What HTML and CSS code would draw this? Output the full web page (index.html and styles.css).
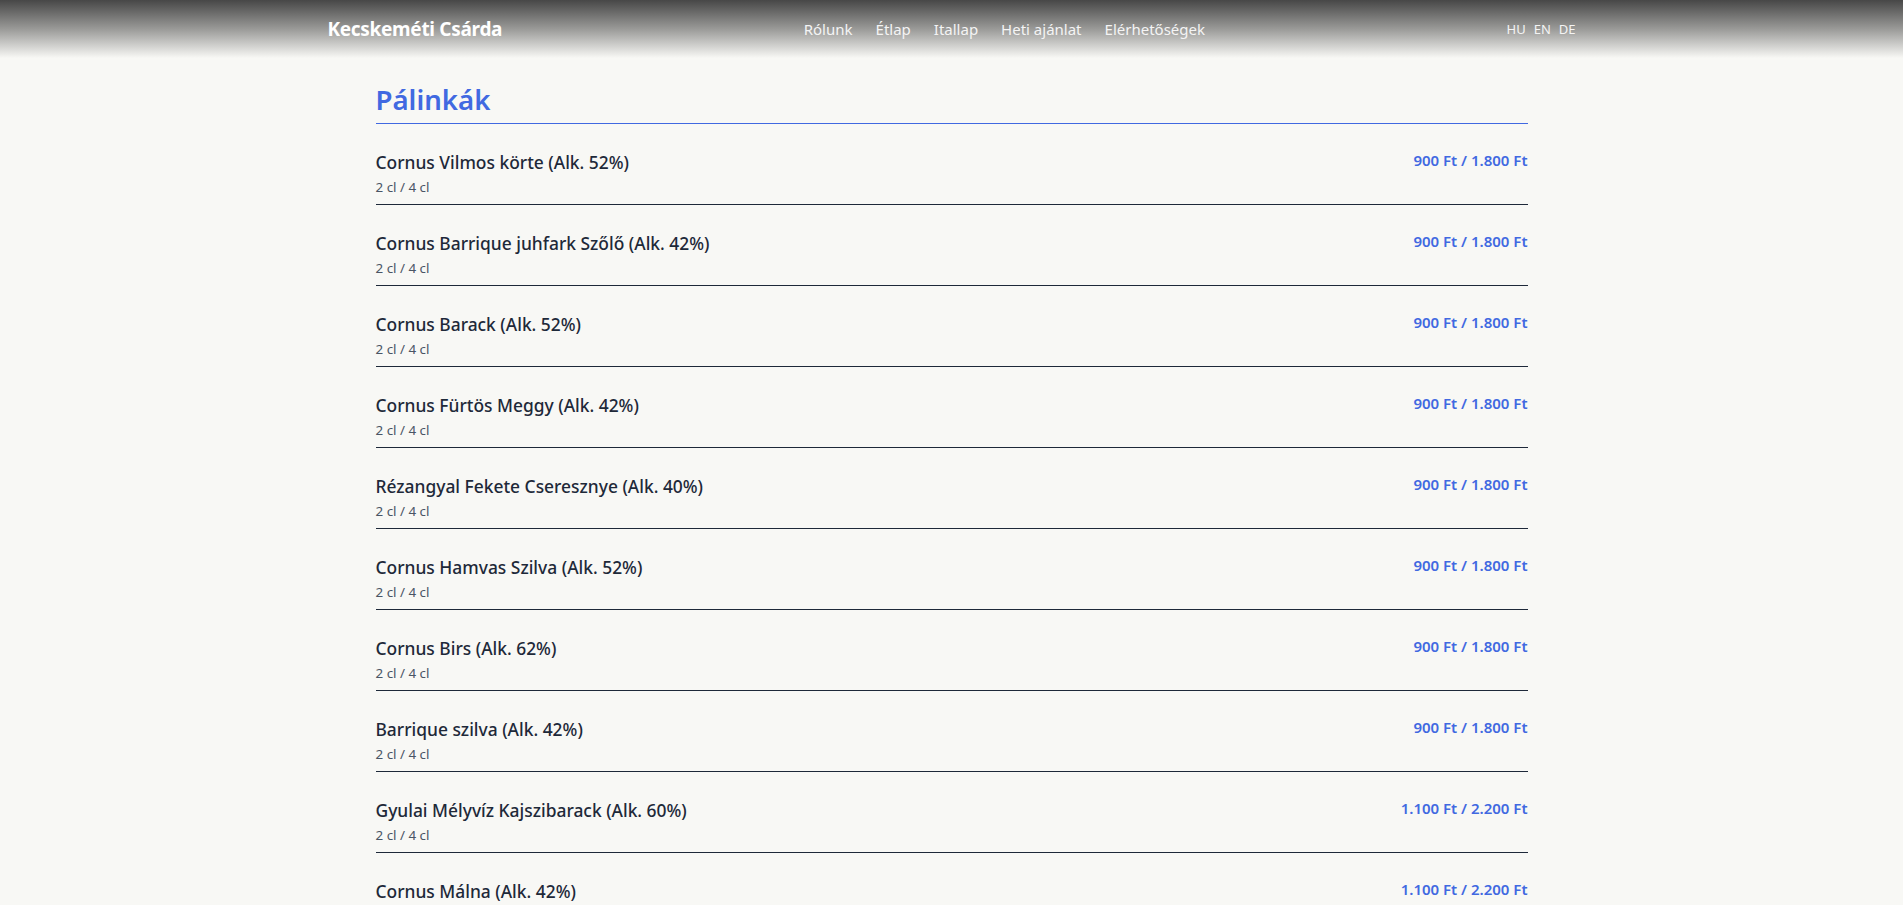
FILE: index.html
```html
<!DOCTYPE html>
<html lang="hu">
<head>
<meta charset="utf-8">
<title>Kecskeméti Csárda – Itallap</title>
<link rel="stylesheet" href="styles.css">
</head>
<body>
<header class="site-header">
  <div class="header-inner">
    <a class="logo" href="#">Kecskeméti Csárda</a>
    <nav class="main-nav">
      <a href="#">Rólunk</a>
      <a href="#">Étlap</a>
      <a href="#">Itallap</a>
      <a href="#">Heti ajánlat</a>
      <a href="#">Elérhetőségek</a>
    </nav>
    <div class="langs">
      <a href="#">HU</a>
      <a href="#">EN</a>
      <a href="#">DE</a>
    </div>
  </div>
</header>
<main class="content">
  <h2 class="section-title">Pálinkák</h2>
  <ul class="menu-list">
    <li class="menu-item"><div class="item-text"><div class="item-name">Cornus Vilmos körte (Alk. 52%)</div><div class="item-size">2 cl / 4 cl</div></div><div class="item-price">900 Ft / 1.800 Ft</div></li>
    <li class="menu-item"><div class="item-text"><div class="item-name">Cornus Barrique juhfark Szőlő (Alk. 42%)</div><div class="item-size">2 cl / 4 cl</div></div><div class="item-price">900 Ft / 1.800 Ft</div></li>
    <li class="menu-item"><div class="item-text"><div class="item-name">Cornus Barack (Alk. 52%)</div><div class="item-size">2 cl / 4 cl</div></div><div class="item-price">900 Ft / 1.800 Ft</div></li>
    <li class="menu-item"><div class="item-text"><div class="item-name">Cornus Fürtös Meggy (Alk. 42%)</div><div class="item-size">2 cl / 4 cl</div></div><div class="item-price">900 Ft / 1.800 Ft</div></li>
    <li class="menu-item"><div class="item-text"><div class="item-name">Rézangyal Fekete Cseresznye (Alk. 40%)</div><div class="item-size">2 cl / 4 cl</div></div><div class="item-price">900 Ft / 1.800 Ft</div></li>
    <li class="menu-item"><div class="item-text"><div class="item-name">Cornus Hamvas Szilva (Alk. 52%)</div><div class="item-size">2 cl / 4 cl</div></div><div class="item-price">900 Ft / 1.800 Ft</div></li>
    <li class="menu-item"><div class="item-text"><div class="item-name">Cornus Birs (Alk. 62%)</div><div class="item-size">2 cl / 4 cl</div></div><div class="item-price">900 Ft / 1.800 Ft</div></li>
    <li class="menu-item"><div class="item-text"><div class="item-name">Barrique szilva (Alk. 42%)</div><div class="item-size">2 cl / 4 cl</div></div><div class="item-price">900 Ft / 1.800 Ft</div></li>
    <li class="menu-item"><div class="item-text"><div class="item-name">Gyulai Mélyvíz Kajszibarack (Alk. 60%)</div><div class="item-size">2 cl / 4 cl</div></div><div class="item-price">1.100 Ft / 2.200 Ft</div></li>
    <li class="menu-item"><div class="item-text"><div class="item-name">Cornus Málna (Alk. 42%)</div><div class="item-size">2 cl / 4 cl</div></div><div class="item-price">1.100 Ft / 2.200 Ft</div></li>
  </ul>
</main>
</body>
</html>
```
FILE: styles.css
```css
* { box-sizing: border-box; }
html, body { margin: 0; padding: 0; }
body {
  background: #f8f8f5;
  font-family: "Noto Sans", "Open Sans", sans-serif;
  color: #1e2939;
}
a { text-decoration: none; color: inherit; }

.site-header {
  height: 58px;
  background: linear-gradient(to bottom, #474747 0%, #9a9a98 50%, #f8f8f5 100%);
}
.header-inner {
  max-width: 1280px;
  height: 100%;
  margin: 0 auto;
  padding: 0 16px;
  display: flex;
  align-items: center;
  justify-content: space-between;
  color: #ffffff;
}
.logo {
  font-size: 19px;
  font-weight: 700;
  line-height: 28px;
  letter-spacing: -0.3px;
}
.main-nav {
  display: flex;
  gap: 23px;
  font-size: 15px;
  line-height: 24px;
  color: #f4f4f4;
}
.langs {
  display: flex;
  gap: 8px;
  font-size: 13px;
  line-height: 20px;
  color: #f4f4f4;
}

.content {
  max-width: 1152px;
  margin: 0 auto;
  padding-top: 23px;
}
.section-title {
  margin: 0;
  font-size: 27.6px;
  line-height: 36px;
  font-weight: 600;
  color: #4169e1;
  padding-bottom: 6px;
  border-bottom: 1px solid #4169e1;
}
.menu-list {
  list-style: none;
  margin: 0;
  padding: 0;
}
.menu-item {
  display: flex;
  justify-content: space-between;
  align-items: flex-start;
  padding: 24px 0 7px;
  border-bottom: 1px solid #1e2939;
}
.item-name {
  font-size: 17.4px;
  line-height: 28px;
  font-weight: 500;
  color: #1e2939;
}
.item-size {
  padding-top: 1px;
  font-size: 13.4px;
  line-height: 20px;
  color: #4a5565;
}
.item-price {
  font-size: 15px;
  line-height: 24px;
  font-weight: 600;
  color: #4169e1;
}
```
